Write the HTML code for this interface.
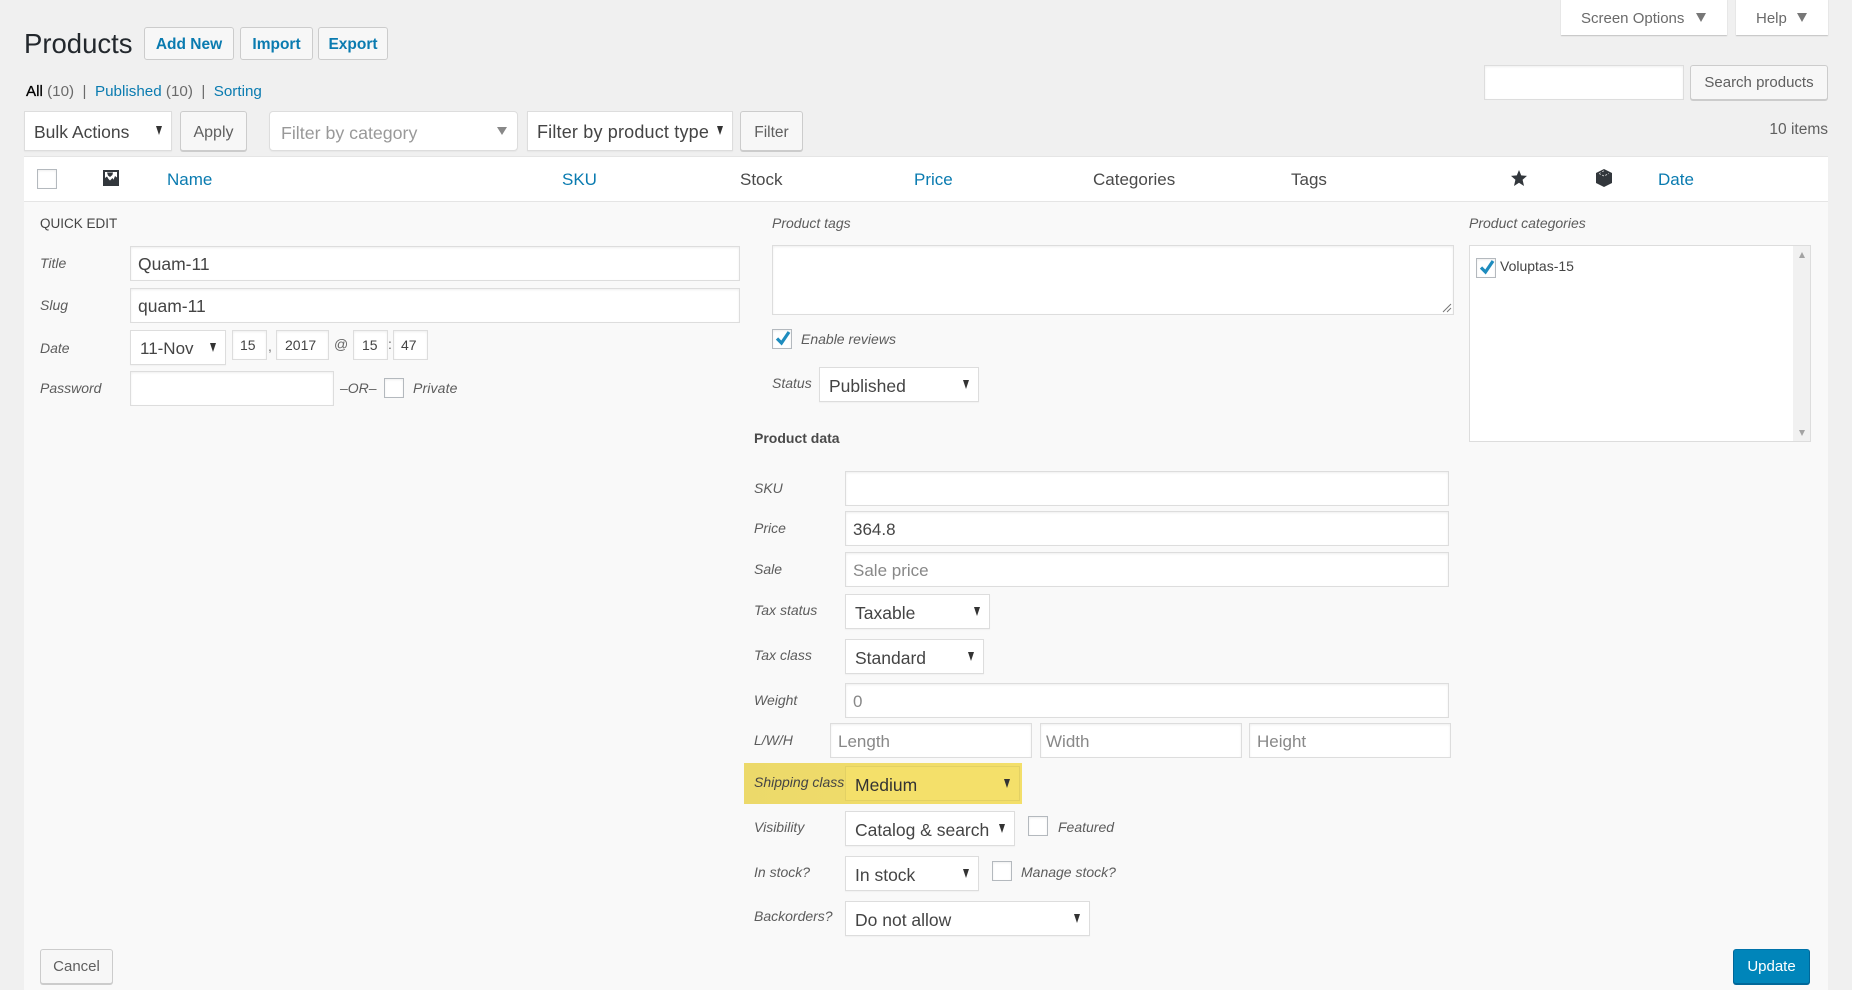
<!DOCTYPE html>
<html><head><meta charset="utf-8"><title>Products</title>
<style>
html,body{margin:0;padding:0;background:#f0f0f0;width:1852px;height:990px;overflow:hidden}
body{font-family:"Liberation Sans",sans-serif;color:#444;position:relative}
.t{position:absolute;white-space:nowrap;line-height:20px;height:20px}
.l{font-size:14px;font-style:italic;color:#5c5c5c}
.h{font-size:17px;color:#4a4a4a}
.h.a,.a{color:#0a7bb0}
.b{position:absolute;box-sizing:border-box;background:#fff;border:1px solid #ddd;box-shadow:inset 0 1px 2px rgba(0,0,0,.07);display:flex;align-items:center;padding:2px 0 0 7px;font-size:17px;color:#444;white-space:nowrap}
.s{box-shadow:0 1px 1px rgba(0,0,0,.04);padding-left:9px;padding-top:3px;font-size:17.5px}
.s:after{content:"";position:absolute;right:9px;top:50%;margin-top:-5px;border-style:solid;border-width:9px 3.5px 0 3.5px;border-color:#333 transparent transparent}
.s.g:after{border-width:8px 5px 0 5px;border-color:#888 transparent transparent;margin-top:-4px;right:10px}
.btn{position:absolute;box-sizing:border-box;background:#f7f7f7;border:1px solid #ccc;border-radius:3px;box-shadow:0 1px 0 #ccc;display:flex;align-items:center;justify-content:center;font-size:15.5px;color:#5f5f5f;white-space:nowrap}
.top{color:#0a7bb0;font-weight:bold;font-size:15.5px;box-shadow:none;background:#f7f7f7;padding-top:2px}
.cb{position:absolute;box-sizing:border-box;width:20px;height:20px;background:#fff;border:1px solid #b4b9be;box-shadow:inset 0 1px 2px rgba(0,0,0,.07)}
.cb svg{position:absolute;left:1px;top:0}
.tab{position:absolute;top:-1px;height:36px;box-sizing:border-box;background:#fff;box-shadow:0 1px 1px rgba(0,0,0,.2);font-size:15px;color:#6a6a6a;line-height:40px}
.tab i{position:absolute;top:14px;border-style:solid;border-width:9px 5px 0;border-color:#777 transparent transparent}
</style></head><body>

<div class="tab" style="left:1561px;width:166px;padding-left:20px">Screen Options<i style="left:135px"></i></div>
<div class="tab" style="left:1736px;width:92px;padding-left:20px">Help<i style="left:61px"></i></div>

<div class="t" style="left:24px;top:26px;font-size:27.5px;line-height:36px;height:36px;color:#23282d">Products</div>
<div class="btn top" style="left:144px;top:27px;width:90px;height:33px">Add New</div>
<div class="btn top" style="left:240px;top:27px;width:73px;height:33px">Import</div>
<div class="btn top" style="left:318px;top:27px;width:70px;height:33px">Export</div>

<div class="t" style="left:26px;top:82px;font-size:15.2px;color:#6a6a6a"><span style="color:#000;-webkit-text-stroke:.3px #000">All</span> (10) &nbsp;|&nbsp; <span class="a">Published</span> (10) &nbsp;|&nbsp; <span class="a">Sorting</span></div>

<div class="b" style="left:1484px;top:65px;width:200px;height:35px"></div>
<div class="btn" style="left:1690px;top:65px;width:138px;height:35px;font-size:15px">Search products</div>
<div class="t" style="right:24px;top:120px;font-size:15.5px;color:#5f5f5f">10 items</div>

<div class="b s" style="left:24px;top:111px;width:148px;height:40px">Bulk Actions</div>
<div class="btn" style="left:180px;top:111px;width:67px;height:40px;padding-top:3px;font-size:16px">Apply</div>
<div class="b s g" style="left:269px;top:111px;width:249px;height:40px;border-radius:4px;color:#999;font-size:17.8px;padding-left:11px;padding-top:4px">Filter by category</div>
<div class="b s" style="left:527px;top:111px;width:206px;height:40px;font-size:18px;letter-spacing:.01em">Filter by product type</div>
<div class="btn" style="left:740px;top:111px;width:63px;height:40px;font-size:15.5px;padding-top:4px">Filter</div>

<div style="position:absolute;left:24px;top:156px;width:1804px;height:46px;box-sizing:border-box;background:#fff;border:1px solid #e5e5e5;border-right:0;border-left:0"></div>
<div class="cb" style="left:37px;top:169px"></div>
<svg style="position:absolute;left:103px;top:170px" width="16" height="16" viewBox="0 0 16 16"><path fill="#32373c" d="M0 0h16v16H0z"/><path fill="#fff" d="M2 2h12v11H2z"/><path fill="#32373c" d="M2 13V8l2-1.500L5.500 9 7 10.500 9.500 8l1 1.800L12 6l2 1.500V13zM4 2.500h6l-.6 2.500L7 7 5 5.500z"/></svg>
<div class="t h a" style="left:167px;top:170px">Name</div>
<div class="t h a" style="left:562px;top:170px">SKU</div>
<div class="t h" style="left:740px;top:170px">Stock</div>
<div class="t h a" style="left:914px;top:170px">Price</div>
<div class="t h" style="left:1093px;top:170px">Categories</div>
<div class="t h" style="left:1291px;top:170px">Tags</div>
<svg style="position:absolute;left:1511px;top:170px" width="16" height="16" viewBox="0 0 16 16"><path fill="#32373c" d="M8 0l2.200 5.400L16 5.900l-4.400 3.800L13 16l-5-3.200L3 16l1.400-6.300L0 5.900l5.800-.5z"/></svg>
<svg style="position:absolute;left:1596px;top:169px" width="16" height="18" viewBox="0 0 16 18"><path fill="#32373c" d="M8 0l8 4v10l-8 4-8-4V4z"/><path fill="none" stroke="#e8e8e8" stroke-width=".8" stroke-dasharray="2 1.500" d="M3 4.500L8 7l5-2.500M8 1.800L4.500 3.500"/></svg>
<div class="t h a" style="left:1658px;top:170px">Date</div>

<div style="position:absolute;left:24px;top:202px;width:1804px;height:788px;background:#f9f9f9"></div>

<div class="t" style="left:40px;top:214px;font-size:13.5px;color:#444">QUICK EDIT</div>
<div class="t l" style="left:40px;top:253px">Title</div>
<div class="b" style="left:130px;top:246px;width:610px;height:35px;font-size:17.5px">Quam-11</div>
<div class="t l" style="left:40px;top:295px">Slug</div>
<div class="b" style="left:130px;top:288px;width:610px;height:35px;font-size:17.5px">quam-11</div>
<div class="t l" style="left:40px;top:338px">Date</div>
<div class="b s" style="left:130px;top:330px;width:96px;height:35px;font-size:17px">11-Nov</div>
<div class="b" style="left:232px;top:330px;width:35px;height:30px;font-size:14px;padding:0 0 0 7px">15</div>
<div class="t" style="left:268px;top:336px;font-size:14px;color:#777">,</div>
<div class="b" style="left:276px;top:330px;width:53px;height:30px;font-size:14px;padding:0 0 0 8px">2017</div>
<div class="t" style="left:334px;top:334px;font-size:14px;color:#666">@</div>
<div class="b" style="left:353px;top:330px;width:35px;height:30px;font-size:14px;padding:0 0 0 8px">15</div>
<div class="t" style="left:388px;top:334px;font-size:14px;color:#666">:</div>
<div class="b" style="left:393px;top:330px;width:35px;height:30px;font-size:14px;padding:0 0 0 7px">47</div>
<div class="t l" style="left:40px;top:378px">Password</div>
<div class="b" style="left:130px;top:371px;width:204px;height:35px"></div>
<div class="t l" style="left:340px;top:378px">–OR–</div>
<div class="cb" style="left:384px;top:378px"></div>
<div class="t l" style="left:413px;top:378px;letter-spacing:.01em">Private</div>

<div class="t l" style="left:772px;top:213px">Product tags</div>
<div class="b" style="left:772px;top:245px;width:682px;height:70px">
<svg style="position:absolute;right:1px;bottom:1px" width="10" height="10" viewBox="0 0 10 10"><path d="M1 9l8-8M5 9l4-4" stroke="#777" stroke-width="1" fill="none"/></svg></div>
<div class="cb" style="left:772px;top:329px"><svg width="18" height="18" viewBox="0 0 18 18"><path d="M3 8.500L7.500 13 15 2" fill="none" stroke="#1e8cbe" stroke-width="3.200"/></svg></div>
<div class="t l" style="left:801px;top:329px">Enable reviews</div>
<div class="t l" style="left:772px;top:373px">Status</div>
<div class="b s" style="left:819px;top:367px;width:160px;height:35px">Published</div>
<div class="t" style="left:754px;top:428px;font-size:14px;font-weight:bold;color:#4a4a4a">Product data</div>

<div class="t l" style="left:1469px;top:213px">Product categories</div>
<div class="b" style="left:1469px;top:245px;width:342px;height:197px;box-shadow:none">
<div style="position:absolute;right:0;top:0;width:17px;height:100%;background:#f1f1f1"></div>
<div style="position:absolute;right:5px;top:6px;border-style:solid;border-width:0 3.5px 6px;border-color:transparent transparent #a3a3a3"></div>
<div style="position:absolute;right:5px;bottom:5px;border-style:solid;border-width:6px 3.5px 0;border-color:#a3a3a3 transparent transparent"></div>
</div>
<div class="cb" style="left:1476px;top:258px"><svg width="18" height="18" viewBox="0 0 18 18"><path d="M3 8.500L7.500 13 15 2" fill="none" stroke="#1e8cbe" stroke-width="3.200"/></svg></div>
<div class="t" style="left:1500px;top:256px;font-size:14px;color:#444">Voluptas-15</div>

<div class="t l" style="left:754px;top:478px">SKU</div>
<div class="b" style="left:845px;top:471px;width:604px;height:35px"></div>
<div class="t l" style="left:754px;top:518px">Price</div>
<div class="b" style="left:845px;top:511px;width:604px;height:35px">364.8</div>
<div class="t l" style="left:754px;top:559px">Sale</div>
<div class="b" style="left:845px;top:552px;width:604px;height:35px;color:#888">Sale price</div>
<div class="t l" style="left:754px;top:600px">Tax status</div>
<div class="b s" style="left:845px;top:594px;width:145px;height:35px">Taxable</div>
<div class="t l" style="left:754px;top:645px">Tax class</div>
<div class="b s" style="left:845px;top:639px;width:139px;height:35px">Standard</div>
<div class="t l" style="left:754px;top:690px">Weight</div>
<div class="b" style="left:845px;top:683px;width:604px;height:35px;color:#888">0</div>
<div class="t l" style="left:754px;top:730px">L/W/H</div>
<div class="b" style="left:830px;top:723px;width:202px;height:35px;color:#888">Length</div>
<div class="b" style="left:1040px;top:723px;width:202px;height:35px;color:#888;padding-left:5px">Width</div>
<div class="b" style="left:1249px;top:723px;width:202px;height:35px;color:#888">Height</div>

<div style="position:absolute;left:744px;top:763px;width:278px;height:41px;background:linear-gradient(90deg,#ecd96a,#f3df6a)"></div>
<div class="t l" style="left:754px;top:772px;color:#444">Shipping class</div>
<div class="b s" style="left:845px;top:766px;width:175px;height:35px;background:#f4e06a;border-color:#e3d164;box-shadow:none;color:#333">Medium</div>

<div class="t l" style="left:754px;top:817px">Visibility</div>
<div class="b s" style="left:845px;top:811px;width:170px;height:35px">Catalog &amp; search</div>
<div class="cb" style="left:1028px;top:816px"></div>
<div class="t l" style="left:1058px;top:817px">Featured</div>
<div class="t l" style="left:754px;top:862px">In stock?</div>
<div class="b s" style="left:845px;top:856px;width:134px;height:35px">In stock</div>
<div class="cb" style="left:992px;top:861px"></div>
<div class="t l" style="left:1021px;top:862px">Manage stock?</div>
<div class="t l" style="left:754px;top:906px">Backorders?</div>
<div class="b s" style="left:845px;top:901px;width:245px;height:35px">Do not allow</div>

<div class="btn" style="left:40px;top:949px;width:73px;height:35px;font-size:15px">Cancel</div>
<div class="btn" style="left:1733px;top:949px;width:77px;height:35px;font-size:15px;background:#0085ba;border-color:#0073aa #006799 #006799;box-shadow:0 1px 0 #006799;color:#fff">Update</div>
</body></html>
